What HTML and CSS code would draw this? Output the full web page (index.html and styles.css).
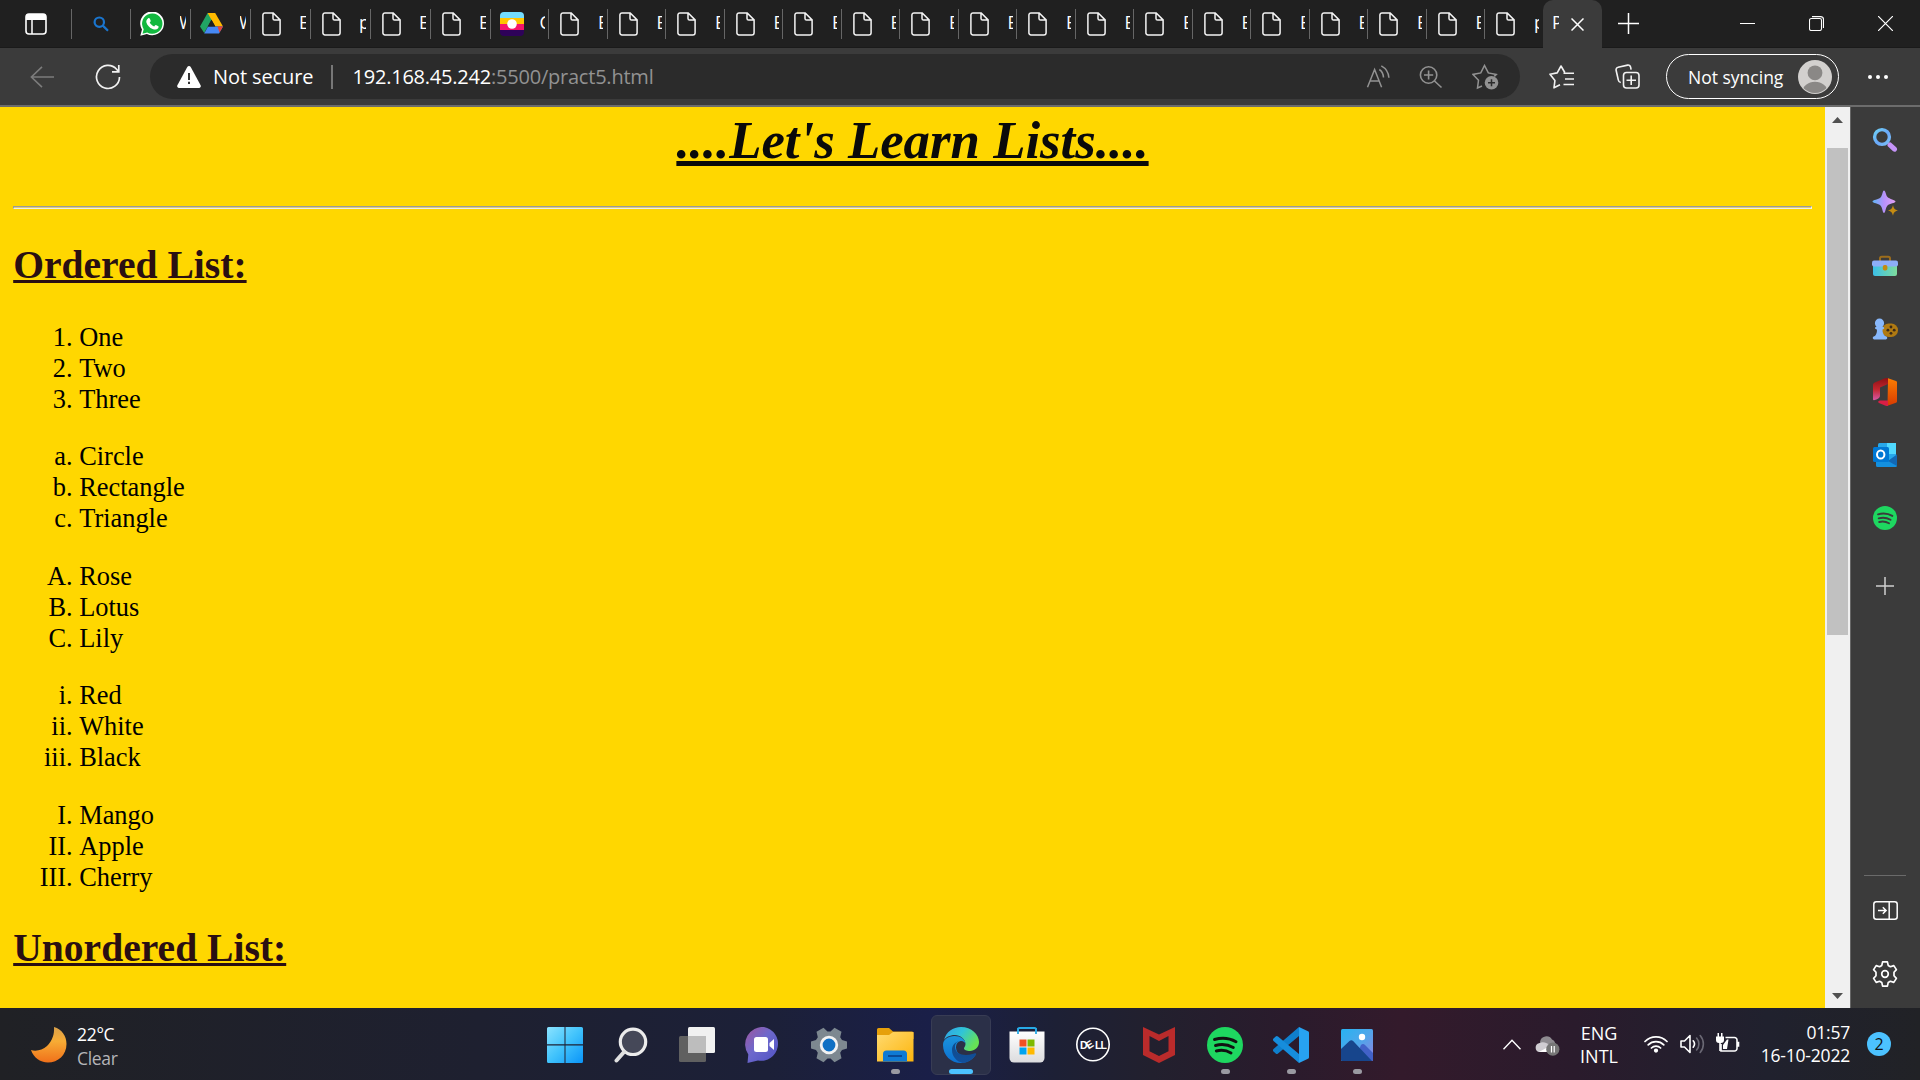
FILE: index.html
```html
<!DOCTYPE html>
<html lang="en">
<head>
<meta charset="utf-8">
<title>Practical 5</title>
<link rel="stylesheet" href="styles.css">
</head>
<body>
<svg class="defs" width="0" height="0">
  <defs>
    <linearGradient id="gSearch" x1="0" y1="0" x2="1" y2="1"><stop offset="0" stop-color="#6fd0f5"/><stop offset=".55" stop-color="#6aa8fa"/><stop offset="1" stop-color="#7cc0f5"/></linearGradient>
    <linearGradient id="gStar" x1="0" y1="0" x2="1" y2="0"><stop offset="0" stop-color="#5fb4f5"/><stop offset=".5" stop-color="#b691fb"/><stop offset="1" stop-color="#e2a0f5"/></linearGradient>
    <linearGradient id="gWin" x1="0" y1="0" x2="1" y2="1"><stop offset="0" stop-color="#8be3ff"/><stop offset=".5" stop-color="#41c3fc"/><stop offset="1" stop-color="#0a94f8"/></linearGradient>
    <linearGradient id="gMoon" x1="0" y1="0" x2="0" y2="1"><stop offset="0" stop-color="#d9a04a"/><stop offset=".4" stop-color="#f7ac35"/><stop offset="1" stop-color="#f0701a"/></linearGradient>
    <linearGradient id="gChat" x1="0" y1="0" x2="1" y2="1"><stop offset="0" stop-color="#a0569d"/><stop offset=".45" stop-color="#6d68cc"/><stop offset="1" stop-color="#4f52c4"/></linearGradient>
    <linearGradient id="gFolder" x1="0" y1="0" x2="1" y2="1"><stop offset="0" stop-color="#ffda70"/><stop offset="1" stop-color="#fdb50d"/></linearGradient>
    <linearGradient id="gEdgeTop" x1="0" y1="0" x2="1" y2=".5"><stop offset="0" stop-color="#2f9fe8"/><stop offset=".5" stop-color="#30c4d8"/><stop offset="1" stop-color="#66e255"/></linearGradient>
    <linearGradient id="gEdgeLow" x1="0" y1="0" x2="0" y2="1"><stop offset="0" stop-color="#1b94dc"/><stop offset="1" stop-color="#0c6fd0"/></linearGradient>
    <linearGradient id="gEdgeIn" x1="0" y1="0" x2="0" y2="1"><stop offset="0" stop-color="#0e4b8a"/><stop offset="1" stop-color="#124f9c"/></linearGradient>
    <linearGradient id="gStore" x1="0" y1="0" x2="0" y2="1"><stop offset="0" stop-color="#fff"/><stop offset="1" stop-color="#dcdcde"/></linearGradient>
    <linearGradient id="gPhoto" x1="0" y1="0" x2="1" y2="1"><stop offset="0" stop-color="#22b4f2"/><stop offset=".5" stop-color="#4fa6ea"/><stop offset="1" stop-color="#9b7be0"/></linearGradient>
    <linearGradient id="gOffice" x1="0" y1="0" x2="0" y2="1"><stop offset="0" stop-color="#fb7d02"/><stop offset="1" stop-color="#d83b01"/></linearGradient>
    <linearGradient id="gOfficeL" x1="0" y1="0" x2="0" y2="1"><stop offset="0" stop-color="#8e1015"/><stop offset=".5" stop-color="#c3262e"/><stop offset="1" stop-color="#d559a8"/></linearGradient>
    <linearGradient id="gBox" x1="0" y1="0" x2="1" y2="0"><stop offset="0" stop-color="#3bc0e8"/><stop offset="1" stop-color="#7fdc9c"/></linearGradient>
    <symbol id="file" viewBox="0 0 19 24"><path d="M3 .9h8.2l6.900 7v12.800a2.300 2.300 0 0 1-2.300 2.300H3A2.100 2.100 0 0 1 .9 20.800V3A2.100 2.100 0 0 1 3 .9zM11 1v5.500A1.600 1.600 0 0 0 12.600 8.100H18" fill="none" stroke="#f4f4f4" stroke-width="1.500"/></symbol>
    <symbol id="spotify" viewBox="0 0 36 36"><circle cx="18" cy="18" r="18" fill="#1ed760"/><path d="M7.500 12.500c7-2 15.500-1.200 21.500 2.300M8.500 18.500c6-1.700 12.500-.9 17.800 2.100M9.300 24c5-1.300 10.200-.7 14.700 1.900" fill="none" stroke="var(--ink,#111)" stroke-width="2.900" stroke-linecap="round"/></symbol>
  </defs>
</svg>

<div class="screen">
  <header class="tabstrip">
    <div class="tab-actions"><svg width="22" height="22" viewBox="0 0 22 22"><rect x="1" y="1" width="20" height="20" rx="3" fill="none" stroke="#fff" stroke-width="1.600"/><path d="M1 3.500A2.500 2.500 0 0 1 3.500 1h15A2.500 2.500 0 0 1 21 3.500V7H1z" fill="#fff"/><path d="M7 7v14" stroke="#fff" stroke-width="1.500"/></svg></div>
    <div class="tab search"><svg width="16" height="16" viewBox="0 0 16 16" fill="none" stroke="#1a75ce" stroke-width="2.200"><circle cx="6.300" cy="6.200" r="4.700"/><path d="M9.800 9.600l5.200 5.200"/></svg></div>
    <div class="tab wide app"><svg width="25" height="24" viewBox="0 0 25 24"><path d="M.3 23.800L2 17.600A11.900 11.900 0 1 1 6.900 22z" fill="#fff"/><path d="M2.500 21.700l1.200-4.500a10.200 10.200 0 1 1 3.500 3.300z" fill="#12b83f"/><path d="M8 6.400c.8-.8 1.600-.4 1.900.4l.8 2c.2.600-.7 1.400-1 1.800 1 1.900 2.400 3.100 4.500 3.900.5-.5 1.100-1.700 1.700-1.500l2.500 1.300c.5.300.1 1.700-.5 2.300-1.300 1.200-3 1.300-5.300.4-3-1.200-5.500-3.900-6.200-6.600-.4-1.600.4-3 1.600-4z" fill="#fff"/></svg><span class="label">W</span></div>
    <div class="tab wide app"><svg width="23" height="21" viewBox="0 0 23 21"><path d="M7.600 0h7.600l-3.700 6.700-7.300 13.300L0 13.500z" fill="#21a464"/><path d="M7.600 0h7.600L23 13.500h-7.700z" fill="#ffba00"/><path d="M8 13.500h15l-4 7H4.200z" fill="#4688f4"/><path d="M17.500 13.500H23l-3.500 6z" fill="#ea4335"/><path d="M11.500 6.700l3.800 6.800H7.800z" fill="#202020"/></svg><span class="label">W</span></div>
    <div class="tab wide"><svg class="file"><use href="#file"/></svg><span class="label">E</span></div>
    <div class="tab wide"><svg class="file"><use href="#file"/></svg><span class="label">p</span></div>
    <div class="tab wide"><svg class="file"><use href="#file"/></svg><span class="label">E</span></div>
    <div class="tab wide"><svg class="file"><use href="#file"/></svg><span class="label">E</span></div>
    <div class="tab app hunt"><svg width="24" height="24" viewBox="0 0 24 24"><clipPath id="rc"><rect width="24" height="24" rx="4"/></clipPath><g clip-path="url(#rc)"><path fill="#72dcff" d="M0 0h24v6H0z"/><path fill="#ffc400" d="M0 6h24v6H0z"/><path fill="#f5146b" d="M0 12h24v6H0z"/><path fill="#2e0259" d="M0 18h24v6H0z"/></g><circle cx="12" cy="12" r="4.800" fill="#fff"/></svg><span class="label">C</span></div>
    <div class="tab"><svg class="file"><use href="#file"/></svg><span class="label">E</span></div>
    <div class="tab"><svg class="file"><use href="#file"/></svg><span class="label">E</span></div>
    <div class="tab"><svg class="file"><use href="#file"/></svg><span class="label">E</span></div>
    <div class="tab"><svg class="file"><use href="#file"/></svg><span class="label">E</span></div>
    <div class="tab"><svg class="file"><use href="#file"/></svg><span class="label">E</span></div>
    <div class="tab"><svg class="file"><use href="#file"/></svg><span class="label">E</span></div>
    <div class="tab"><svg class="file"><use href="#file"/></svg><span class="label">E</span></div>
    <div class="tab"><svg class="file"><use href="#file"/></svg><span class="label">E</span></div>
    <div class="tab"><svg class="file"><use href="#file"/></svg><span class="label">E</span></div>
    <div class="tab"><svg class="file"><use href="#file"/></svg><span class="label">E</span></div>
    <div class="tab"><svg class="file"><use href="#file"/></svg><span class="label">E</span></div>
    <div class="tab"><svg class="file"><use href="#file"/></svg><span class="label">E</span></div>
    <div class="tab"><svg class="file"><use href="#file"/></svg><span class="label">E</span></div>
    <div class="tab"><svg class="file"><use href="#file"/></svg><span class="label">E</span></div>
    <div class="tab"><svg class="file"><use href="#file"/></svg><span class="label">E</span></div>
    <div class="tab"><svg class="file"><use href="#file"/></svg><span class="label">E</span></div>
    <div class="tab"><svg class="file"><use href="#file"/></svg><span class="label">p</span></div>
    <div class="tab active"><span class="label">P</span><svg width="13" height="13" viewBox="0 0 13 13" stroke="#fff" stroke-width="1.500"><path d="M.5.5l12 12M12.500.5l-12 12"/></svg></div>
    <svg class="new-tab" width="21" height="21" viewBox="0 0 21 21" stroke="#fff" stroke-width="1.500"><path d="M0 10.500h21M10.500 0v21"/></svg>
    <div class="window-buttons">
      <svg width="15" height="15" viewBox="0 0 15 15" stroke="#fff"><path d="M0 7.500h15"/></svg>
      <svg width="15" height="15" viewBox="0 0 15 15" fill="none" stroke="#fff" stroke-width="1.100"><rect x=".5" y="2.500" width="12" height="12" rx="1.800"/><path d="M3 .6h8.500a3 3 0 0 1 3 3V12"/></svg>
      <svg width="15" height="15" viewBox="0 0 15 15" stroke="#fff" stroke-width="1.200"><path d="M0 0l15 15M15 0L0 15"/></svg>
    </div>
  </header>

  <nav class="toolbar">
    <svg class="back" width="24" height="22" viewBox="0 0 24 22" fill="none" stroke="#7c7c7c" stroke-width="1.600"><path d="M24 11H1.500M12 .8L1.400 11 12 21.200"/></svg>
    <svg class="reload" width="26" height="26" viewBox="0 0 26 26" fill="none" stroke="#f2f2f2" stroke-width="1.700"><path d="M24.500 13A11.500 11.500 0 1 1 21.600 5.300L23.200 7.200M23.800 1v6.800H17"/></svg>
    <div class="address">
      <svg class="warn" width="24" height="22" viewBox="0 0 24 22"><path d="M10.300 1a2 2 0 0 1 3.400 0l9.900 18.200a1.900 1.900 0 0 1-1.600 2.800H2A1.900 1.900 0 0 1 .4 19.200z" fill="#fff"/><path d="M12 7v7M12 15.800v2.200" stroke="#2b2b2b" stroke-width="1.900"/></svg>
      <span class="secure">Not secure</span>
      <span class="bar"></span>
      <span class="url"><b>192.168.45.242</b>:5500/pract5.html</span>
      <div class="address-icons">
        <svg width="24" height="24" viewBox="0 0 24 24" fill="none" stroke="#929292" stroke-width="1.500"><path d="M1.500 22.300L8.600 4.500l7 17.800M4 16h9.300M13.300 4.500c2.600 1.700 4 4.400 4.200 8M15.300.9c4.600 2.500 7.200 6.500 7.600 11.800"/></svg>
        <svg width="24" height="24" viewBox="0 0 24 24" fill="none" stroke="#929292" stroke-width="1.600"><circle cx="9.600" cy="10" r="8.200"/><path d="M15.500 16l7 6.500M5 10h9.200M9.600 5.400v9.200"/></svg>
        <svg width="28" height="26" viewBox="0 0 28 26"><path d="M10 22l-4.500 2 1-7.800L1 10.400l7.800-1.500L12.500 1.500l3.800 7.400 8 1.500-2 2" fill="none" stroke="#929292" stroke-width="1.500"/><circle cx="19.500" cy="18.800" r="6.800" fill="#929292"/><path d="M19.500 15.300v7M16 18.800h7" stroke="#2b2b2b" stroke-width="1.500"/></svg>
      </div>
    </div>
    <svg class="favs" width="25" height="25" viewBox="0 0 25 25" fill="none" stroke="#f2f2f2" stroke-width="1.600" stroke-linejoin="round"><path d="M11 20.800L5 23.800l.9-7.200L1 10.200l7.200-1.300L12 2l3.800 6.500M14.500 9.300H25M16 15h9M14.500 20.500H25"/></svg>
    <svg class="collect" width="25" height="25" viewBox="0 0 25 25" fill="none" stroke="#f2f2f2" stroke-width="1.600"><rect x="8.500" y="8.500" width="15.500" height="15.500" rx="3"/><path d="M16.200 11.500v9.500M11.500 16.200H21M5.800 18.500a3 3 0 0 1-2.500-2.500L1.100 6.300a2.500 2.500 0 0 1 2-3l9.500-2.200a2.500 2.500 0 0 1 3 2l.5 2.500"/></svg>
    <div class="profile"><span>Not syncing</span><svg width="34" height="34" viewBox="0 0 34 34"><clipPath id="av"><circle cx="17" cy="17" r="16"/></clipPath><circle cx="17" cy="17" r="17" fill="#d2d0ce"/><circle cx="17" cy="12.800" r="7.400" fill="#8a8886"/><ellipse cx="17" cy="32" rx="12.500" ry="10.200" fill="#8a8886" clip-path="url(#av)"/></svg></div>
    <svg class="more" width="20" height="4" viewBox="0 0 20 4" fill="#fff"><circle cx="2" cy="2" r="2"/><circle cx="10" cy="2" r="2"/><circle cx="18" cy="2" r="2"/></svg>
  </nav>

  <div class="content">
    <div class="frame">
      <main class="page">
        <h1>....Let's Learn Lists....</h1>
        <hr>
        <h2>Ordered List:</h2>
        <ol><li>One</li><li>Two</li><li>Three</li></ol>
        <ol type="a"><li>Circle</li><li>Rectangle</li><li>Triangle</li></ol>
        <ol type="A"><li>Rose</li><li>Lotus</li><li>Lily</li></ol>
        <ol type="i"><li>Red</li><li>White</li><li>Black</li></ol>
        <ol type="I"><li>Mango</li><li>Apple</li><li>Cherry</li></ol>
        <h2>Unordered List:</h2>
      </main>
      <div class="scrollbar">
        <svg width="11" height="6" viewBox="0 0 11 6"><path d="M5.500 0L11 6H0z" fill="#505050"/></svg>
        <div class="thumb"></div>
        <svg width="11" height="6" viewBox="0 0 11 6"><path d="M0 0h11L5.500 6z" fill="#505050"/></svg>
      </div>
    </div>
    <aside class="sidebar">
      <div class="side"><svg width="26" height="26" viewBox="0 0 26 26" fill="none"><circle cx="10" cy="10" r="7.400" stroke="url(#gSearch)" stroke-width="3.400"/><path d="M18 18l4.500 4.200" stroke="#c594f8" stroke-width="5" stroke-linecap="round"/></svg></div>
      <div class="side"><svg width="26" height="26" viewBox="0 0 26 26"><path d="M12 .5c1.500 0 1.800 4.500 3.500 6.500s8 3 8 4.500-6 2-8 4-2 7.500-3.500 7.500-1.500-5.500-3.500-7.500-8-2.500-8-4 6-2 8-4 2-7 3.500-7z" fill="url(#gStar)"/><path d="M21 15c.8 3.500 1.500 4.500 5 5.500-3.500 1-4.200 1.700-5 5.300-.9-3.600-1.600-4.300-5-5.300 3.400-1 4.100-2 5-5.500z" fill="#c48b12"/></svg></div>
      <div class="side"><svg width="26" height="22" viewBox="0 0 26 22"><path d="M8 6V3.500A1.800 1.800 0 0 1 9.800 1.700h6.400A1.800 1.800 0 0 1 18 3.500V6" fill="none" stroke="#9c6d1c" stroke-width="2"/><path d="M1 10h24v9a2 2 0 0 1-2 2H3a2 2 0 0 1-2-2z" fill="url(#gBox)"/><rect y="5.500" width="26" height="6" rx="2" fill="#8daef8"/><rect x="10.800" y="10" width="4.600" height="5.500" rx="1.800" fill="#c48b12"/></svg></div>
      <div class="side"><svg width="26" height="22" viewBox="0 0 26 22"><rect x="10" y="5.500" width="16" height="13.500" rx="6.700" fill="#b07a12"/><g fill="#3b2a18"><circle cx="19" cy="9" r="1.400"/><circle cx="19" cy="15.300" r="1.400"/><circle cx="15.900" cy="12.200" r="1.400"/><circle cx="22.200" cy="12.200" r="1.400"/></g><path d="M3 21.500c-3 0-3-3 0-3.500 2-2.500 2-4.500 1.900-6.500-2.500-.5-2.500-2.300-.4-2.800a4.600 4.600 0 1 1 6 0c2.300.5 2.300 2.300 0 2.800 0 2.500.5 4.500 2.500 6.500 3 .5 3 3.500 0 3.500z" fill="#88b8fb"/></svg></div>
      <div class="side"><svg width="24" height="28" viewBox="0 0 24 28"><path d="M15 .3l8 2.600a1.500 1.500 0 0 1 1 1.400v19a1.500 1.500 0 0 1-1 1.500l-8.500 2.900z" fill="url(#gOffice)"/><path d="M15 0v6l-8 3.500v8.500c0 2-2.500 3.200-6 4.300a1 1 0 0 1-1-1V7c0-1.200.7-2 1.700-2.500L12 .3z" fill="url(#gOfficeL)"/><path d="M7 22.500h8v5.400c-1 .3-2 .1-3-.3l-6-2.600c-1.500-.8-.8-2.300 1-2.500z" fill="#d91e45"/></svg></div>
      <div class="side"><svg width="24" height="24" viewBox="0 0 24 24"><rect x="5" y="0" width="18" height="20" rx="1.500" fill="#28a8ea"/><path d="M14 0h9v11h-9z" fill="#50d9ff"/><path d="M24 11.500v11a1.500 1.500 0 0 1-1.500 1.500H4.500A1.500 1.500 0 0 1 3 22.500V19l12-1z" fill="#1490df"/><path d="M15 18l9 5v-11.500z" fill="#1268b5"/><rect y="4" width="16" height="15" rx="1.500" fill="#0078d4"/><ellipse cx="7.700" cy="11.500" rx="3.700" ry="4.100" fill="none" stroke="#fff" stroke-width="2"/></svg></div>
      <div class="side spot"><svg width="24" height="24"><use href="#spotify"/></svg></div>
      <div class="side plus"><svg width="18" height="18" viewBox="0 0 18 18" stroke="#cfcfcf" stroke-width="1.500"><path d="M0 9h18M9 0v18"/></svg></div>
      <div class="side-bottom">
        <div class="side"><svg width="25" height="19" viewBox="0 0 25 19" fill="none" stroke="#fff" stroke-width="1.500"><rect x=".8" y=".8" width="23.400" height="17.400" rx="2.500"/><path d="M16.200 1v17M5 9.500h8M9.800 6.200l3.300 3.300-3.300 3.300"/></svg></div>
        <div class="side"><svg width="26" height="26" viewBox="0 0 26 26" fill="none" stroke="#fff" stroke-width="1.700" stroke-linejoin="round"><circle cx="13" cy="13" r="3.300"/><path d="M10.600.9h4.800l.8 3.500 2.200 1.300 3.400-1.100 2.600 4-2.400 2.700v3.400l2.400 2.700-2.600 4-3.400-1.100-2.200 1.300-.8 3.500h-4.800l-.8-3.500-2.200-1.300-3.400 1.100-2.600-4L4 14.700v-3.400L1.600 8.600l2.600-4 3.400 1.100 2.200-1.300z"/></svg></div>
      </div>
    </aside>
  </div>

  <footer class="taskbar">
    <div class="weather">
      <svg width="36" height="36" viewBox="0 0 36 36"><path d="M23 0c8 2.500 12.500 9 12.500 17 0 11-8.500 18.500-18.500 18.500-8 0-14.500-5-17-12.500 4.500 1.500 11.500.5 16-4 5.500-5.500 7.500-12 7-19z" fill="url(#gMoon)"/></svg>
      <div class="weather-text"><span>22°C</span><span class="dim">Clear</span></div>
    </div>
    <div class="apps">
      <div class="app-slot"><svg width="36" height="36" viewBox="0 0 36 36"><path d="M1.500 0h16v17.200H0V1.500A1.500 1.500 0 0 1 1.500 0zM18.500 0h16A1.500 1.500 0 0 1 36 1.500v15.700H18.500zM0 18.500h17.500V36h-16A1.500 1.500 0 0 1 0 34.500zM18.500 18.500H36v16a1.500 1.500 0 0 1-1.500 1.500h-16z" fill="url(#gWin)"/></svg></div>
      <div class="app-slot"><svg width="36" height="36" viewBox="0 0 36 36" fill="none"><circle cx="20" cy="14.800" r="12.700" fill="#454858" stroke="#ececec" stroke-width="3.200"/><path d="M11 25l-7.500 8.500" stroke="#e0e0e0" stroke-width="4" stroke-linecap="round"/></svg></div>
      <div class="app-slot"><svg width="36" height="36" viewBox="0 0 36 36"><rect x="9" y="0" width="27" height="26" rx="1.500" fill="#f1f1f1"/><rect y="9" width="27" height="26" rx="1.500" fill="#606060"/><path d="M9 9h18v17H9z" fill="#bdbdbd"/></svg></div>
      <div class="app-slot"><svg width="36" height="36" viewBox="-1 0 36 36"><path d="M18 0a17 17 0 1 1-6 33.500L1.500 36l.8-8.500A17.500 17.500 0 0 1 18 0z" fill="url(#gChat)"/><rect x="8" y="10" width="14" height="15" rx="2.500" fill="#fff"/><path d="M23.500 16l4.500-4v11l-4.500-4z" fill="#fff"/></svg></div>
      <div class="app-slot"><svg width="36" height="36" viewBox="0 0 36 36"><path d="M12.500.8l4 3.700h3l4-3.700 7 4-1.300 5.500 1.800 2.700 5 1.500v7l-5 1.500-1.800 2.700 1.300 5.500-7 4-4-3.700h-3l-4 3.700-7-4 1.300-5.500L5 23 0 21.500v-7L5 13l1.800-2.700L5.500 4.800z" fill="#7d8890"/><circle cx="18" cy="18" r="7.800" fill="#1070c4" stroke="#f2f2f2" stroke-width="2.800"/></svg></div>
      <div class="app-slot"><svg width="37" height="36" viewBox="0 0 37 36"><path d="M0 2.500A1.500 1.500 0 0 1 1.500 1h10.500l4 3.500h19A1.500 1.500 0 0 1 36.500 6v6H0z" fill="#e6a00a"/><path d="M0 8h12l4-3h20.500v29.500H0z" fill="url(#gFolder)"/><path d="M6 34.500V27a3.500 3.500 0 0 1 3.500-3.500h17A3.500 3.500 0 0 1 30 27v7.500z" fill="#0f7ad4"/><path d="M11 29h14" stroke="#0a4a96" stroke-width="2"/></svg><i class="pill"></i></div>
      <div class="app-slot current"><svg width="36" height="36" viewBox="0 0 36 36"><path d="M1 13C3 5 10 0 18 0c10.500 0 18 7.500 18 15 0 5.500-4.500 9-9 9-3.500 0-6-1.200-6-2.500s1.500-2 1.500-4.500C22.500 12 17 8 12 8 6.500 8 2.500 10.500 1 13z" fill="url(#gEdgeTop)"/><path d="M0 18C0 12.500 5 9 11.500 9c6 0 11 3.500 11 8 0-2-3-3.500-5-3-5 1-6 8-2 12.500 3.500 4 10 4.500 17.500.5-3 5.500-8.500 9-15 9C8 36 0 28.500 0 18z" fill="url(#gEdgeLow)"/><path d="M17 14c-3.500.5-5 3-5 6 0 5 5 8 11 8 4.500 0 7-1.300 9-1.700 1.200-.2 1.500.7.800 1.700-3 4.500-8 7.500-13 7.900C14 35 9 29.500 9 23c0-4.500 3-8.500 8-9z" fill="url(#gEdgeIn)"/></svg><i class="pill long"></i></div>
      <div class="app-slot"><svg width="36" height="36" viewBox="0 0 36 36"><path d="M9 7V2.500A1.500 1.500 0 0 1 10.500 1h15A1.500 1.500 0 0 1 27 2.500V7" fill="none" stroke="#27a9e6" stroke-width="2"/><path d="M.5 4.500h35V31a4.500 4.500 0 0 1-4.500 4.500H5A4.500 4.500 0 0 1 .5 31z" fill="url(#gStore)"/><path d="M9 1v6M27 1v6" stroke="#27a9e6" stroke-width="1.800"/><path d="M10.500 12.500h7v7h-7z" fill="#f25022"/><path d="M18.500 12.500h7v7h-7z" fill="#7fba00"/><path d="M10.500 20.500h7v7h-7z" fill="#00a4ef"/><path d="M18.500 20.500h7v7h-7z" fill="#ffb900"/></svg></div>
      <div class="app-slot"><svg width="36" height="36" viewBox="0 0 36 36"><circle cx="18" cy="17.500" r="16.200" fill="none" stroke="#fff" stroke-width="1.600"/><text x="5" y="21.500" class="dell">D</text><text class="dell" transform="translate(13.500 22.500) rotate(-32)">E</text><text x="20" y="21.500" class="dell" textLength="12">LL</text></svg></div>
      <div class="app-slot"><svg width="36" height="36" viewBox="0 0 36 36"><path d="M2 0l16 7.500L34 0v28l-16 8L2 28zM8.500 9v15.300L18 29l9.500-4.700V9L18 14z" fill="#ba2b2b" fill-rule="evenodd"/></svg></div>
      <div class="app-slot"><svg width="36" height="36"><use href="#spotify"/></svg><i class="pill"></i></div>
      <div class="app-slot"><svg width="36" height="36" viewBox="0 0 36 36"><path d="M26 0v9L5 26.500c-1 .8-1.500.7-2.300 0L.5 24.600c-.8-.8-.7-1.800 0-2.500z" fill="#0f7fcc"/><path d="M26 36v-9L5 9.500c-1-.8-1.500-.7-2.300 0L.5 11.400c-.8.800-.7 1.800 0 2.500z" fill="#168ddc"/><path d="M26 0l9 4.300c.7.300 1 .8 1 1.500v24.400c0 .7-.3 1.200-1 1.500L26 36z" fill="#27a2f0"/></svg><i class="pill"></i></div>
      <div class="app-slot"><svg width="36" height="36" viewBox="0 0 36 36"><clipPath id="pc"><rect x="2" y="2" width="32" height="32" rx="1.500"/></clipPath><g clip-path="url(#pc)"><rect width="36" height="36" fill="url(#gPhoto)"/><path d="M14 36l8-18q2-2 4 0l10 10v8z" fill="#4262c8"/><path d="M2 22l8.500-8q1.800-1.500 3.600 0L33 34H2z" fill="#17458c"/></g><circle cx="23" cy="10" r="3.200" fill="#fff"/></svg><i class="pill"></i></div>
    </div>
    <div class="tray">
      <svg class="chev" width="18" height="11" viewBox="0 0 18 11" fill="none" stroke="#fff" stroke-width="1.400"><path d="M.5 10.200L9 1.200l8.500 9"/></svg>
      <svg class="cloud" width="25" height="20" viewBox="0 0 25 20"><path d="M5 6a6.500 6.500 0 0 1 12-2.500 5 5 0 0 1 3 5.500L8 12z" fill="#8e8b90"/><path d="M4 16a4.500 4.500 0 0 1 0-8.700c4-2.500 7.500-.5 12 2L8 16z" fill="#d0cdd2"/><path d="M4 16l10-5.500 4 5.500z" fill="#fff"/><circle cx="17.800" cy="13.200" r="6.600" fill="#767676"/><path d="M16.500 10v6.500M19.200 10v6.500" stroke="#fff" stroke-width="1.200"/></svg>
      <div class="lang"><span>ENG</span><span>INTL</span></div>
      <svg class="wifi" width="24" height="18" viewBox="0 0 24 18" fill="none" stroke="#fff" stroke-width="1.700" stroke-linecap="round"><path d="M1 6.500a15.500 15.500 0 0 1 22 0M4.200 9.800a11 11 0 0 1 15.600 0M7.400 13a6.500 6.500 0 0 1 9.200 0"/><circle cx="12" cy="15.600" r="1.300" fill="#fff"/></svg>
      <svg class="vol" width="25" height="20" viewBox="0 0 25 20" fill="none" stroke="#fff" stroke-width="1.600" stroke-linecap="round" stroke-linejoin="round"><path d="M1 7h3.500L10 1.500v17L4.500 13H1zM13.200 6.800a5 5 0 0 1 0 6.400"/><path d="M16.600 4a9 9 0 0 1 0 12M20.200 1.500a13 13 0 0 1 0 17" stroke="#6a6874"/></svg>
      <svg class="batt" width="24" height="20" viewBox="0 0 24 20"><path d="M9.500 4.500h9a2.500 2.500 0 0 1 2.500 2.500v8.500a2.500 2.500 0 0 1-2.500 2.500H5V11" fill="none" stroke="#fff" stroke-width="1.600"/><path d="M21 8.800h2.300v5H21zM11 6.500h1.500L11 16H7v-4zM0 3.500h8V7a3 3 0 0 1-3 3H3A3 3 0 0 1 0 7zM1.500 0H3v4H1.500zM5 0h1.500v4H5zM3.200 9h1.600v9H3.200z" fill="#fff"/></svg>
      <div class="clock"><span>01:57</span><span>16-10-2022</span></div>
      <div class="badge">2</div>
    </div>
  </footer>
</div>
</body>
</html>
```
FILE: styles.css
```css
* { box-sizing: border-box; }
body { margin: 0; background: #3b3b3b; font-family: "Open Sans", "Noto Sans", sans-serif; color: #fff; overflow: hidden; }
svg { display: block; flex: none; }
.defs { position: absolute; }
.screen { width: 1920px; height: 1080px; display: flex; flex-direction: column; }

/* tabs */
.tabstrip { height: 48px; background: #202020; display: flex; align-items: center; border-bottom: 1px solid #1a1a1a; flex: none; }
.tab-actions { width: 71px; padding-left: 25px; flex: none; }
.tab { width: 58.5px; height: 30px; border-left: 1.5px solid #666; padding-left: 11px; display: flex; align-items: center; flex: none; }
.tab.wide { width: 60px; }
.tab.search { width: 59px; padding-left: 21px; }
.tab.app { padding-left: 9px; }
.tab.hunt { width: 58px; }
.file { width: 19px; height: 24px; }
.label { width: 5px; overflow: hidden; font-size: 17.500px; line-height: 26px; margin: -4px 3.500px 0 auto; white-space: nowrap; }
.tab.wide .label { width: 6px; margin-right: 4.500px; text-indent: -0.500px; }
.tab.active { width: 59.500px; height: 48px; background: #3b3b3b; border: 0; border-radius: 10px 10px 0 0; padding: 0 18px 0 10px; margin-bottom: -1px; }
.tab.active .label { width: 6px; margin: -4px auto 0 0; text-indent: -0.500px; }
.new-tab { margin: -1px 0 0 16px; }
.window-buttons { margin-left: auto; padding-right: 27px; display: flex; gap: 54px; }

/* toolbar */
.toolbar { height: 59px; background: #3b3b3b; border-bottom: 2px solid #6c6c6c; display: flex; align-items: center; flex: none; padding: 0 32px 0 30px; }
.reload { margin-left: 41px; }
.address { margin-left: 29px; width: 1370px; height: 45px; border-radius: 23px; background: #2b2b2b; display: flex; align-items: center; padding: 0 20px 0 27px; font-size: 20px; flex: none; }
.secure { margin-left: 12px; width: 101px; letter-spacing: -0.100px; white-space: nowrap; }
.bar { width: 1.500px; height: 24px; background: #777; margin: 0 20px 0 17px; }
.url { color: #929292; letter-spacing: -0.220px; white-space: nowrap; }
.url b { color: #fff; font-weight: 400; }
.address-icons { margin-left: auto; display: flex; align-items: center; gap: 29px; }
.favs { margin-left: 29px; }
.collect { margin-left: 41px; }
.profile { margin-left: 26px; width: 173px; height: 45px; border: 1.500px solid #fff; border-radius: 23px; display: flex; align-items: center; justify-content: space-between; padding: 0 6px 0 21px; font-size: 17.500px; white-space: nowrap; }
.more { margin-left: auto; }

/* browser content */
.content { height: 901px; display: flex; flex: none; }
.frame { width: 1851px; display: flex; border-right: 1px solid #666; flex: none; }
.page { width: 1825px; height: 901px; overflow: hidden; background: #ffd700; color: #000; padding: 3px 13.200px 0; font: 26.400px/31px "Liberation Serif", serif; }
.page h1 { margin: 0 0 35px; font-size: 52.800px; line-height: 61px; font-style: italic; text-align: center; text-decoration: underline 5px; color: #0a0a0a; }
.page hr { margin: 0; height: 3px; border: 1px solid; border-color: #9a9a9a #eee #eee #9a9a9a; background: #dccb78; }
.page h2 { margin: 33px 0; font-size: 39.600px; line-height: 47px; text-decoration: underline 3px; color: #2a0f12; }
.page ol { margin: 0 0 26.400px; padding-left: 66px; }
.page h2:last-child { margin-top: 32px; }
.scrollbar { width: 25px; background: #f0f0f0; display: flex; flex-direction: column; align-items: center; padding: 10px 0 9px; }
.thumb { width: 21px; height: 487px; background: #c1c1c1; margin: 25px 0 auto; }

/* sidebar */
.sidebar { width: 69px; background: #3b3b3b; display: flex; flex-direction: column; align-items: center; padding: 1px 1px 0 0; }
.side { height: 63px; display: flex; align-items: center; flex: none; }
.spot { --ink: #3b3b3b; }
.plus { height: 73px; }
.side-bottom { width: 42px; margin-top: auto; border-top: 1px solid #6a6a6a; display: flex; flex-direction: column; align-items: center; padding: 3px 0 3px; }

/* taskbar */
.taskbar { height: 72px; display: grid; grid-template-columns: 532px 858px 530px; background: linear-gradient(90deg, #202125 0, #1e2030 25%, #1c2038 40%, #1a1f48 48.500%, #1d2035 55%, #22202e 60%, #2a1b2c 67%, #331a2b 73%, #2a1b2c 82%, #20212e 92%, #212226 100%); }
.weather { display: flex; padding: 14px 0 0 31px; gap: 10px; }
.weather svg { margin-top: 5px; }
.weather-text, .lang, .clock { display: flex; flex-direction: column; font-size: 17.500px; line-height: 24px; }
.weather-text { letter-spacing: -0.300px; }
.dim { color: #b5b5b8; }
.apps { display: flex; }
.app-slot { width: 66px; height: 72px; padding-top: 19px; display: flex; flex-direction: column; align-items: center; flex: none; }
.app-slot.current { width: 60px; height: 60px; margin: 7px 3px 0; padding-top: 11px; background: #2b3048; border: 1px solid #383c54; border-radius: 6px; }
.pill { width: 9px; height: 5px; border-radius: 3px; background: #9a9aa2; margin-top: 6px; }
.pill.long { width: 24px; background: #4cc2ff; }
.dell { font: 700 10.500px "Liberation Sans", sans-serif; fill: #fff; }
.tray { display: flex; align-items: center; padding-left: 113px; }
.cloud { margin-left: 14px; margin-top: 4px; }
.lang { width: 62px; margin: 2px 0 0 8px; text-align: center; font-size: 18px; line-height: 23px; }
.wifi { margin-left: 14px; }
.vol { margin-left: 12px; }
.batt { margin-left: 11px; margin-top: -2px; }
.clock { width: 110px; text-align: right; line-height: 23px; margin-top: -1px; white-space: nowrap; letter-spacing: -0.200px; }
.badge { width: 24px; height: 24px; margin-left: 17px; border-radius: 50%; background: #4cc2ff; color: #111; font-size: 16px; line-height: 24px; text-align: center; }
```
